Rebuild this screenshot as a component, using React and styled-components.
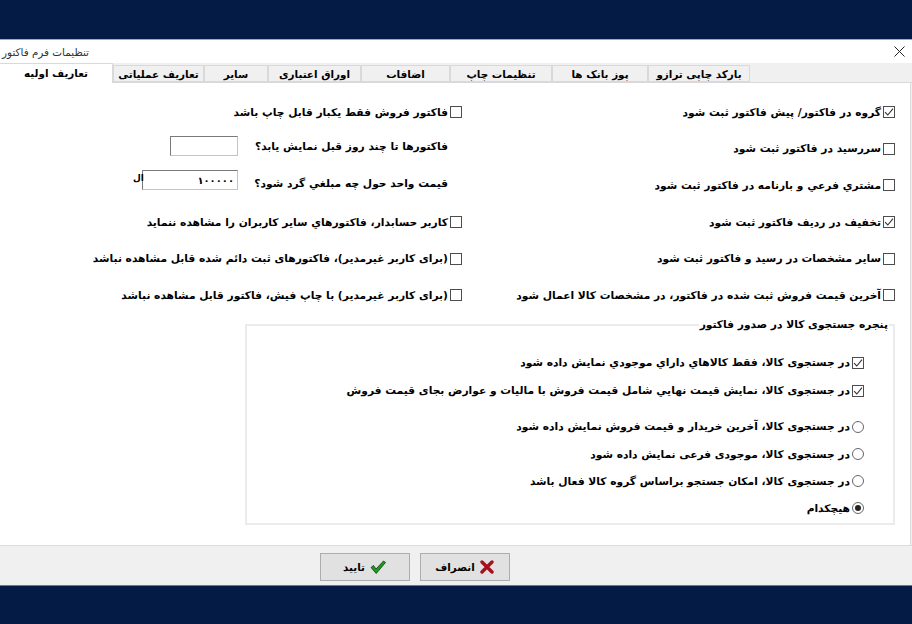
import React from "react";
import styled, { createGlobalStyle } from "styled-components";

const GlobalStyle = createGlobalStyle`
  html, body { margin: 0; padding: 0; background: #041c45; }
  * { box-sizing: border-box; }
`;

const Page = styled.div`
  width: 912px;
  height: 624px;
  overflow: hidden;
  padding-top: 39px;
  background: #041c45;
  font-family: "DejaVu Sans", sans-serif;
  color: #000;
`;
const Dialog = styled.div`
  height: 547px;
  background: #f0f0f0;
  border-top: 1px solid #a8a8a8;
  border-bottom: 1px solid #777;
  display: flex;
  flex-direction: column;
`;
const TitleBar = styled.div`
  height: 23px;
  flex: none;
  background: #fff;
  display: flex;
  align-items: center;
  justify-content: space-between;
  padding: 0 7px 0 2px;
  font-size: 10.4px;
  color: #333;
`;
const Tabs = styled.div`
  height: 20px;
  flex: none;
  display: flex;
  background: #f0f0f0;
  border-bottom: 1px solid #d9d9d9;
`;
const Tab = styled.div`
  width: ${(p) => p.$w}px;
  flex: none;
  display: flex;
  align-items: center;
  justify-content: center;
  font-size: 10.4px;
  font-weight: bold;
  background: ${(p) => (p.$active ? "#fff" : "#f0f0f0")};
  border: 1px solid #d9d9d9;
  border-bottom: ${(p) => (p.$active ? "none" : "1px solid #d9d9d9")};
  border-left: ${(p) => (p.$active ? "none" : "1px solid #d9d9d9")};
  height: ${(p) => (p.$active ? "20px" : "17px")};
  margin-top: ${(p) => (p.$active ? "0" : "2px")};
  padding-bottom: ${(p) => (p.$active ? "2px" : "0")};
  position: relative;
  z-index: ${(p) => (p.$active ? 1 : 0)};
`;
const Body = styled.div`
  flex: 1;
  display: flex;
  flex-direction: column;
  background: #fff;
  border-right: 1px solid #dcdcdc;
  margin-right: 1px;
  padding: 11px 15px 0 0;
`;
const Columns = styled.div`
  display: grid;
  grid-template-columns: 462px 1fr;
  grid-auto-rows: 36.6px;
`;
const Cell = styled.div`
  display: flex;
  justify-content: flex-end;
  align-items: center;
  gap: 2px;
`;
const Label = styled.span`
  direction: rtl;
  font-size: 10.7px;
  font-weight: bold;
  white-space: nowrap;
`;
const CheckBox = styled.span`
  width: 12px;
  height: 12px;
  flex: none;
  border: 1px solid #4d4d4d;
  background: #fff;
  display: flex;
  align-items: center;
  justify-content: center;
`;
const RadioDot = styled.span`
  width: 12px;
  height: 12px;
  flex: none;
  border: 1px solid #666;
  border-radius: 50%;
  background: #fff;
  display: flex;
  align-items: center;
  justify-content: center;
  &::after {
    content: "";
    width: 6px;
    height: 6px;
    border-radius: 50%;
    background: ${(p) => (p.$on ? "#222" : "transparent")};
  }
`;
const InputRow = styled.div`
  display: flex;
  align-items: center;
  justify-content: flex-end;
  padding: 0 14px 4px 0;
`;
const FieldSlot = styled.div`
  width: 210px;
  flex: none;
  display: flex;
  justify-content: flex-end;
  align-items: center;
  position: relative;
  margin-right: auto;
  margin-left: 28px;
  padding-bottom: ${(p) => p.$raise}px;
`;
const Field = styled.div`
  width: ${(p) => p.$w}px;
  height: 20px;
  border: 1px solid #7a7a7a;
  border-right-color: #c4c4c4;
  border-bottom-color: #c4c4c4;
  background: #fff;
  font-size: 10px;
  font-weight: bold;
  display: flex;
  align-items: center;
  justify-content: flex-end;
  padding-right: 3px;
`;
const Unit = styled.span`
  position: absolute;
  left: 105px;
  top: 3px;
  font-size: 9px;
  font-weight: bold;
`;
const Group = styled.div`
  position: relative;
  margin: 10px 0 0 245px;
  width: 650px;
  height: 201px;
  border: 2px solid #ebebeb;
  padding: 23px 29px 0 0;
`;
const GroupTitle = styled.div`
  position: absolute;
  top: -8px;
  right: 4px;
  background: #fff;
  padding: 0 1px;
  direction: rtl;
  font-size: 10.7px;
  font-weight: bold;
`;
const Option = styled.div`
  height: ${(p) => p.$h}px;
  margin-top: ${(p) => p.$gap || 0}px;
  display: flex;
  justify-content: flex-end;
  align-items: center;
  gap: 2px;
`;
const Footer = styled.div`
  height: 40px;
  flex: none;
  background: #f0f0f0;
  border-top: 1px solid #dcdcdc;
  display: flex;
  justify-content: center;
  gap: 10px;
  padding: 7px 83px 0 0;
`;
const Button = styled.div`
  width: 90px;
  height: 28px;
  background: #e1e1e1;
  border: 1px solid #adadad;
  display: flex;
  align-items: center;
  justify-content: center;
  gap: 5px;
  font-size: 10.3px;
  font-weight: bold;
`;

const tabs = [
  ["تعاريف اوليه", 113, true],
  ["تعاريف عملياتی", 91],
  ["سایر", 64],
  ["اوراق اعتباری", 93],
  ["اضافات", 89],
  ["تنظیمات چاپ", 102],
  ["پوز بانک ها", 96],
  ["بارکد چاپی ترازو", 102],
];

const Tick = () => (
  <svg width="10" height="10" viewBox="0 0 10 10">
    <path d="M1 5.2 L3.8 8 L9 1.6" fill="none" stroke="#333" strokeWidth="1.1" />
  </svg>
);

const Check = ({ text, on }) => (
  <Cell>
    <Label>{text}</Label>
    <CheckBox>{on && <Tick />}</CheckBox>
  </Cell>
);

const GroupOption = ({ text, h, gap, on, radio }) => (
  <Option $h={h} $gap={gap}>
    <Label>{text}</Label>
    {radio ? <RadioDot $on={on} /> : <CheckBox>{on && <Tick />}</CheckBox>}
  </Option>
);

export default function App() {
  return (
    <Page>
      <GlobalStyle />
      <Dialog>
        <TitleBar>
          <span dir="rtl">تنظیمات فرم فاکتور</span>
          <svg width="11" height="11" viewBox="0 0 11 11">
            <path d="M0.5 0.5 L10.5 10.5 M10.5 0.5 L0.5 10.5" stroke="#222" strokeWidth="1" />
          </svg>
        </TitleBar>
        <Tabs>
          {tabs.map(([label, w, active]) => (
            <Tab key={label} $w={w} $active={active} dir="rtl">{label}</Tab>
          ))}
        </Tabs>
        <Body>
          <Columns>
            <Check text="فاکتور فروش فقط یکبار قابل چاپ باشد" />
            <Check text="گروه در فاکتور/ پیش فاکتور ثبت شود" on />
            <InputRow>
              <FieldSlot $raise={2}>
                <Field $w={68} />
              </FieldSlot>
              <Label>فاکتورها تا چند روز قبل نمایش یابد؟</Label>
            </InputRow>
            <Check text="سررسید در فاکتور ثبت شود" />
            <InputRow>
              <FieldSlot $raise={6}>
                <Unit>ال</Unit>
                <Field $w={96}>۱۰۰۰۰۰</Field>
              </FieldSlot>
              <Label>قیمت واحد حول چه مبلغي گرد شود؟</Label>
            </InputRow>
            <Check text="مشتري فرعي و بارنامه در فاکتور ثبت شود" />
            <Check text="کاربر حسابدار، فاکتورهاي سایر کاربران را مشاهده ننماید" />
            <Check text="تخفیف در ردیف فاکتور ثبت شود" on />
            <Check text="(برای کاربر غیرمدیر)، فاکتورهای ثبت دائم شده قابل مشاهده نباشد" />
            <Check text="سایر مشخصات در رسید و فاکتور ثبت شود" />
            <Check text="(برای کاربر غیرمدیر) با چاپ فیش، فاکتور قابل مشاهده نباشد" />
            <Check text="آخرین قیمت فروش ثبت شده در فاکتور، در مشخصات کالا اعمال شود" />
          </Columns>
          <Group>
            <GroupTitle>پنجره جستجوی کالا در صدور فاکتور</GroupTitle>
            <GroupOption h={28} on text="در جستجوی کالا، فقط کالاهاي داراي موجودي نمایش داده شود" />
            <GroupOption h={28} on text="در جستجوی کالا، نمایش قیمت نهایي شامل قیمت فروش با مالیات و عوارض بجای قیمت فروش" />
            <GroupOption h={28} gap={8} radio text="در جستجوی کالا، آخرین خریدار و قیمت فروش نمایش داده شود" />
            <GroupOption h={27} radio text="در جستجوی کالا، موجودی فرعی نمایش داده شود" />
            <GroupOption h={27} radio text="در جستجوی کالا، امکان جستجو براساس گروه کالا فعال باشد" />
            <GroupOption h={27} radio on text="هیچکدام" />
          </Group>
        </Body>
        <Footer>
          <Button>
            <span dir="rtl">تایید</span>
            <svg width="16" height="16" viewBox="0 0 16 16">
              <path d="M1 8.5 L3.5 6.5 L6 10 L13.5 2 L15.5 3.5 L6.2 14.5 Z" fill="#1c9c1c" stroke="#0c3a10" strokeWidth="0.8" />
            </svg>
          </Button>
          <Button>
            <span dir="rtl">انصراف</span>
            <svg width="14" height="14" viewBox="0 0 14 14">
              <path d="M2 2 L12 12 M12 2 L2 12" stroke="#a5101c" strokeWidth="3.4" strokeLinecap="round" />
            </svg>
          </Button>
        </Footer>
      </Dialog>
    </Page>
  );
}
